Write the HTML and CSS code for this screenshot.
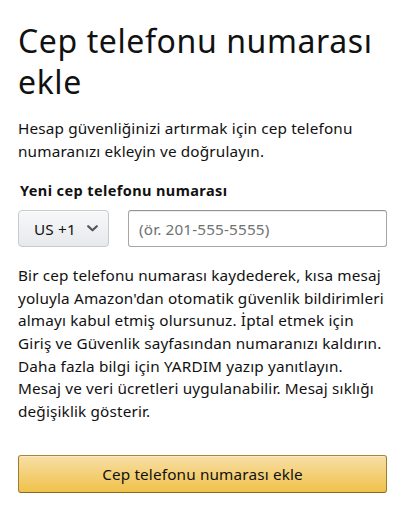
FILE: index.html
```html
<!DOCTYPE html>
<html lang="tr">
<head>
<meta charset="utf-8">
<link rel="stylesheet" href="styles.css">
</head>
<body>
<main class="page">
  <h1 class="title">Cep telefonu numarası ekle</h1>
  <p class="intro">Hesap güvenliğinizi artırmak için cep telefonu numaranızı ekleyin ve doğrulayın.</p>
  <label class="label" for="phone">Yeni cep telefonu numarası</label>
  <div class="phone-row">
    <button class="country" type="button">
      <span>US +1</span>
      <svg class="chev" width="11" height="7" viewBox="0 0 11 7"><polyline points="1.2,1.2 5.5,5.3 9.8,1.2" fill="none" stroke="#555" stroke-width="2.2" stroke-linecap="round" stroke-linejoin="round"/></svg>
    </button>
    <input class="phone" id="phone" type="text" placeholder="(ör. 201-555-5555)">
  </div>
  <p class="legal">Bir cep telefonu numarası kaydederek, kısa mesaj yoluyla Amazon'dan otomatik güvenlik bildirimleri almayı kabul etmiş olursunuz. İptal etmek için Giriş ve Güvenlik sayfasından numaranızı kaldırın. Daha fazla bilgi için YARDIM yazıp yanıtlayın. Mesaj ve veri ücretleri uygulanabilir. Mesaj sıklığı değişiklik gösterir.</p>
  <button class="submit" type="button">Cep telefonu numarası ekle</button>
</main>
</body>
</html>
```
FILE: styles.css
```css
html, body {
  margin: 0;
  padding: 0;
  background: #fff;
}
body {
  font-family: "Noto Sans", "DejaVu Sans", sans-serif;
  color: #111;
}
.page {
  width: 369px;
  padding: 20px 18px 0;
  display: flex;
  flex-direction: column;
}
.title {
  margin: 0;
  font-size: 32px;
  line-height: 41px;
  font-weight: 400;
  letter-spacing: 0.6px;
}
.intro {
  margin: 15px 0 0;
  font-size: 15.3px;
  line-height: 23px;
  letter-spacing: 0.15px;
}
.label {
  margin: 17px 0 0 2px;
  font-size: 14.5px;
  line-height: 20px;
  font-weight: 700;
  letter-spacing: 0.4px;
}
.phone-row {
  display: flex;
  gap: 19px;
  margin-top: 10px;
  height: 37px;
}
.country {
  width: 91px;
  height: 37px;
  box-sizing: border-box;
  border: 1px solid #c7cbcb;
  border-radius: 4px;
  background: linear-gradient(#f7f8fa, #e7e9ec);
  box-shadow: 0 1px 0 rgba(255,255,255,.6) inset;
  display: flex;
  align-items: center;
  gap: 11px;
  padding: 0 0 0 15px;
  font-family: inherit;
  font-size: 15.3px;
  color: #111;
  letter-spacing: 0.15px;
}
.chev {
  display: block;
}
.phone {
  flex: 1;
  min-width: 0;
  height: 37px;
  box-sizing: border-box;
  border: 1px solid #a6a6a6;
  border-top-color: #949494;
  border-radius: 3px;
  box-shadow: 0 1px 0 rgba(255,255,255,.5), 0 1px 0 rgba(0,0,0,.07) inset;
  padding: 0 10px;
  font-family: inherit;
  font-size: 15.3px;
  letter-spacing: 0.15px;
  color: #111;
  outline: none;
}
.phone::placeholder {
  color: #6f7373;
}
.legal {
  margin: 17px 0 0;
  font-size: 15.3px;
  line-height: 22.67px;
  letter-spacing: 0.15px;
}
.submit {
  margin-top: 32px;
  height: 38px;
  box-sizing: border-box;
  border: 1px solid;
  border-color: #a88734 #9c7e31 #846a29;
  border-radius: 3px;
  background: linear-gradient(#f7dfa5, #f0c14b);
  box-shadow: 0 1px 0 rgba(255,255,255,.4) inset;
  font-family: inherit;
  font-size: 15.3px;
  letter-spacing: 0.15px;
  color: #111;
}
```
